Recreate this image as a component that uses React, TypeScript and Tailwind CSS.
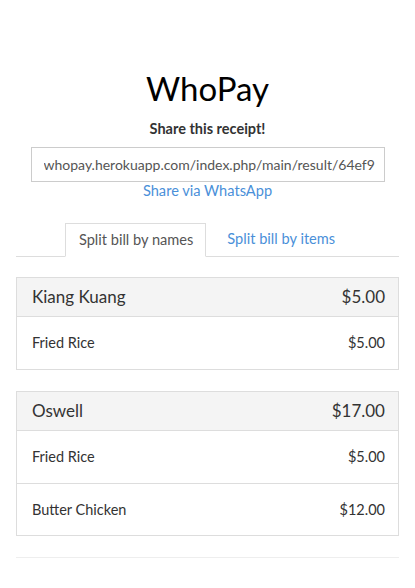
const people = [
  { name: "Kiang Kuang", total: "$5.00", items: [{ name: "Fried Rice", price: "$5.00" }] },
  {
    name: "Oswell",
    total: "$17.00",
    items: [
      { name: "Fried Rice", price: "$5.00" },
      { name: "Butter Chicken", price: "$12.00" },
    ],
  },
];

const App = () => {
  return (
    <div className="min-h-screen bg-white px-4 text-[#333] font-['Lato','Open_Sans',sans-serif]">
      <div className="pt-[66px] text-center">
        <h1 className="text-[33px] leading-[44px] text-black">WhoPay</h1>
        <p className="mt-[9px] text-[14.5px] font-bold leading-[20px]">Share this receipt!</p>
        <div className="mt-[8px] flex justify-center">
          <input
            readOnly
            value="whopay.herokuapp.com/index.php/main/result/64ef9"
            className="h-[35px] w-[354px] border border-[#ccc] bg-white pl-3 pr-[4px] text-[14px] text-[#555] outline-none"
          />
        </div>
        <a className="-mt-px block text-[14.6px] leading-[19px] text-[#4a90d9]">Share via WhatsApp</a>
      </div>

      <div className="mt-[23px] flex justify-center border-b border-[#ddd]">
        <div className="-mb-px border border-[#ddd] border-b-white bg-white pl-[13px] pr-[12px] py-[7px] text-[14.6px] leading-[18px] text-[#555]">
          Split bill by names
        </div>
        <div className="pl-[21px] pr-[15px] py-[7px] text-[14.6px] leading-[18px] text-[#4a90d9]">Split bill by items</div>
      </div>

      <div className="mt-5 flex flex-col gap-[21px]">
        {people.map((p) => (
          <div key={p.name} className="border border-[#ddd]">
            <div className="flex h-[39px] items-center justify-between border-b border-[#ddd] bg-[#f4f4f4] pl-[15px] pr-[13px] text-[17px]">
              <span>{p.name}</span>
              <span>{p.total}</span>
            </div>
            {p.items.map((it, i) => (
              <div
                key={i}
                className={
                  "flex h-[52px] items-center justify-between pl-[15px] pr-[13px] text-[14.5px] " +
                  (i > 0 ? "border-t border-[#ddd]" : "")
                }
              >
                <span>{it.name}</span>
                <span>{it.price}</span>
              </div>
            ))}
          </div>
        ))}
      </div>

      <hr className="mt-[21px] border-[#eee]" />
    </div>
  );
};

export default App;
